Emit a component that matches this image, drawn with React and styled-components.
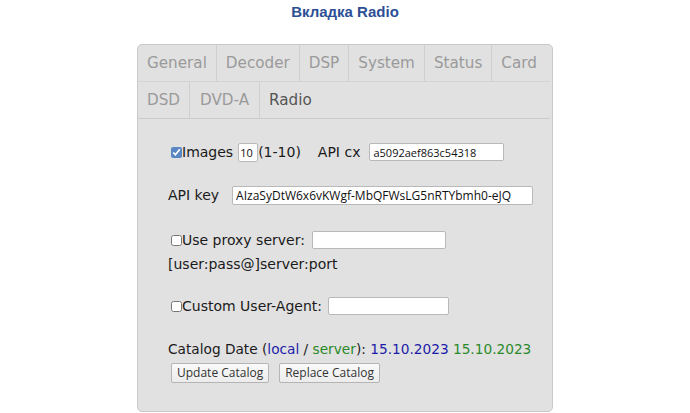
import React from "react";
import styled, { createGlobalStyle } from "styled-components";

const Global = createGlobalStyle`
  html, body { margin: 0; padding: 0; background: #ffffff; }
  body { font-family: "DejaVu Sans", sans-serif; }
`;

const Page = styled.div`
  width: 690px;
  height: 413px;
  overflow: hidden;
  display: flex;
  flex-direction: column;
  align-items: center;
`;

const Title = styled.h3`
  margin: 3px 0 0;
  height: 41px;
  font-family: "Liberation Sans", Arial, sans-serif;
  font-weight: bold;
  font-size: 15px;
  line-height: 17px;
  color: #2d4f95;
`;

const Panel = styled.div`
  box-sizing: border-box;
  width: 416px;
  height: 368px;
  background: #e1e1e1;
  border: 1px solid #c9c9c9;
  border-radius: 5px;
`;

const Tabs = styled.div`
  display: flex;
  flex-wrap: wrap;
  margin: 0 2px 0 0;
  border-bottom: 1px solid #cbcbcb;
`;

const Tab = styled.div`
  height: 36px;
  padding: 0 ${(p) => p.$pad || 9}px;
  display: flex;
  align-items: center;
  font-size: 15.2px;
  color: ${(p) => (p.$active ? "#555555" : "#9a9a9a")};
  border-right: ${(p) => (p.$active || p.$end ? "none" : "1px solid #d0d0d0")};
  border-bottom: ${(p) => (p.$last ? "none" : "1px solid #d3d3d3")};
  ${(p) => p.$grow && "flex: 1;"}
`;

const Content = styled.div`
  padding: 21px 0 0 30px;
  font-size: 14px;
  color: #1a1a1a;
`;

const Row = styled.div`
  display: flex;
  align-items: center;
  height: 24px;
  margin-bottom: ${(p) => p.$mb ?? 19}px;
  white-space: nowrap;
  font-size: ${(p) => p.$fs || 14}px;
`;

const Check = styled.input.attrs({ type: "checkbox" })`
  width: 11px;
  height: 11px;
  margin: 0 0 0 3px;
  accent-color: #5b86c4;
`;

const TextInput = styled.input.attrs({ type: "text", readOnly: true })`
  box-sizing: border-box;
  width: ${(p) => p.$w}px;
  height: ${(p) => p.$h || 18}px;
  margin-left: ${(p) => p.$ml || 0}px;
  padding: 0 ${(p) => p.$px ?? 3}px;
  border: 1px solid #b9b9b9;
  border-radius: 2px;
  background: #fff;
  font-family: "Open Sans", sans-serif;
  font-size: ${(p) => p.$fs || 11}px;
  color: #111;
  outline: none;
`;

const Label = styled.span`
  margin-left: ${(p) => p.$ml || 0}px;
`;

const Colored = styled.span`
  color: ${(p) => (p.$c === "blue" ? "#1c1ca8" : "#2a8a2a")};
`;

const Buttons = styled.div`
  display: flex;
  gap: 10px;
  margin: 2px 0 0 3px;
`;

const Button = styled.button`
  height: 20px;
  padding: 0 5px;
  font-family: "Open Sans", sans-serif;
  font-size: 12px;
  line-height: 18px;
  color: #333;
  background: linear-gradient(#fafafa, #ececec);
  border: 1px solid #b5b5b5;
  border-radius: 2px;
`;

export default function App() {
  return (
    <>
      <Global />
      <Page>
        <Title>Вкладка Radio</Title>
        <Panel>
          <Tabs>
            <Tab>General</Tab>
            <Tab>Decoder</Tab>
            <Tab>DSP</Tab>
            <Tab>System</Tab>
            <Tab>Status</Tab>
            <Tab $grow $end>Card</Tab>
            <Tab $last>DSD</Tab>
            <Tab $last $pad={10}>DVD-A</Tab>
            <Tab $last $active $grow>Radio</Tab>
          </Tabs>
          <Content>
            <Row>
              <Check defaultChecked />
              <Label>Images</Label>
              <TextInput $w={20} $h={19} $ml={5} $px={1} defaultValue="10" />
              <Label>(1-10)</Label>
              <Label $ml={17}>API cx</Label>
              <TextInput $w={135} $ml={9} defaultValue="a5092aef863c54318" />
            </Row>
            <Row $mb={21}>
              <Label>API key</Label>
              <TextInput $w={301} $h={19} $ml={13} $fs={12} defaultValue="AIzaSyDtW6x6vKWgf-MbQFWsLG5nRTYbmh0-eJQ" />
            </Row>
            <Row $mb={0}>
              <Check />
              <Label>Use proxy server:</Label>
              <TextInput $w={134} $ml={7} defaultValue="" />
            </Row>
            <Row $mb={18}>
              <Label>[user:pass@]server:port</Label>
            </Row>
            <Row>
              <Check />
              <Label>Custom User-Agent:</Label>
              <TextInput $w={121} $ml={6} defaultValue="" />
            </Row>
            <Row $mb={1} $fs={13.7}>
              <Label>
                Catalog Date (<Colored $c="blue">local</Colored> /{" "}
                <Colored $c="green">server</Colored>):{" "}
                <Colored $c="blue">15.10.2023</Colored>{" "}
                <Colored $c="green">15.10.2023</Colored>
              </Label>
            </Row>
            <Buttons>
              <Button>Update Catalog</Button>
              <Button>Replace Catalog</Button>
            </Buttons>
          </Content>
        </Panel>
      </Page>
    </>
  );
}
